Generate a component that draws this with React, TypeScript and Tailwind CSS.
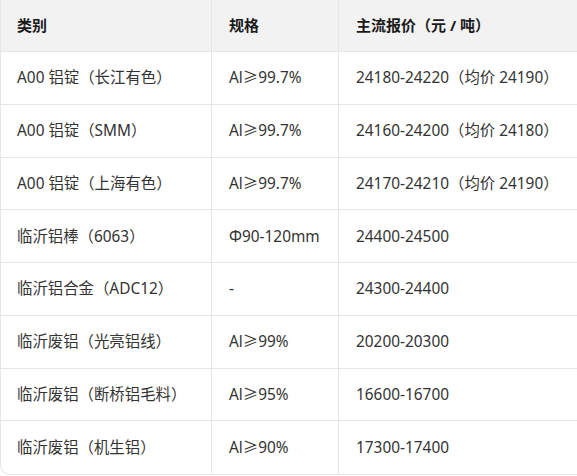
const rows = [
  ['A00 铝锭（长江有色）', 'Al≥99.7%', '24180-24220（均价 24190）'],
  ['A00 铝锭（SMM）', 'Al≥99.7%', '24160-24200（均价 24180）'],
  ['A00 铝锭（上海有色）', 'Al≥99.7%', '24170-24210（均价 24190）'],
  ['临沂铝棒（6063）', 'Φ90-120mm', '24400-24500'],
  ['临沂铝合金（ADC12）', '-', '24300-24400'],
  ['临沂废铝（光亮铝线）', 'Al≥99%', '20200-20300'],
  ['临沂废铝（断桥铝毛料）', 'Al≥95%', '16600-16700'],
  ['临沂废铝（机生铝）', 'Al≥90%', '17300-17400'],
]

const FONT = "font-['Segoe_UI','Noto_Sans','Noto_Sans_CJK_SC',sans-serif]"

export default function App() {
  return (
    <div className={`w-full overflow-hidden bg-white ${FONT}`}>
      <div className="w-[600px] overflow-hidden rounded-b-[10px] border-b border-l border-[#e6e6e6]">
        {/* header */}
        <div className="flex h-[52px] border-b border-[#e6e6e6] bg-[#f2f2f2] text-[15px] font-bold text-[#1a1a1a]">
          <div className="flex w-[211px] items-center border-r border-[#e6e6e6] pl-4">类别</div>
          <div className="flex w-[127px] items-center border-r border-[#e6e6e6] pl-[17px]">规格</div>
          <div className="flex flex-1 items-center pl-[17px]">主流报价（元 / 吨）</div>
        </div>
        {rows.map(([name, spec, price], i) => (
          <div
            key={i}
            className={`flex h-[52.75px] text-[15.4px] text-[#333] ${i < rows.length - 1 ? 'border-b border-[#e6e6e6]' : ''}`}
          >
            <div className="flex w-[211px] items-center border-r border-[#e6e6e6] pl-4">{name}</div>
            <div className="flex w-[127px] items-center border-r border-[#e6e6e6] pl-[17px]">{spec}</div>
            <div className="flex flex-1 items-center pl-[17px]">{price}</div>
          </div>
        ))}
      </div>
    </div>
  )
}
